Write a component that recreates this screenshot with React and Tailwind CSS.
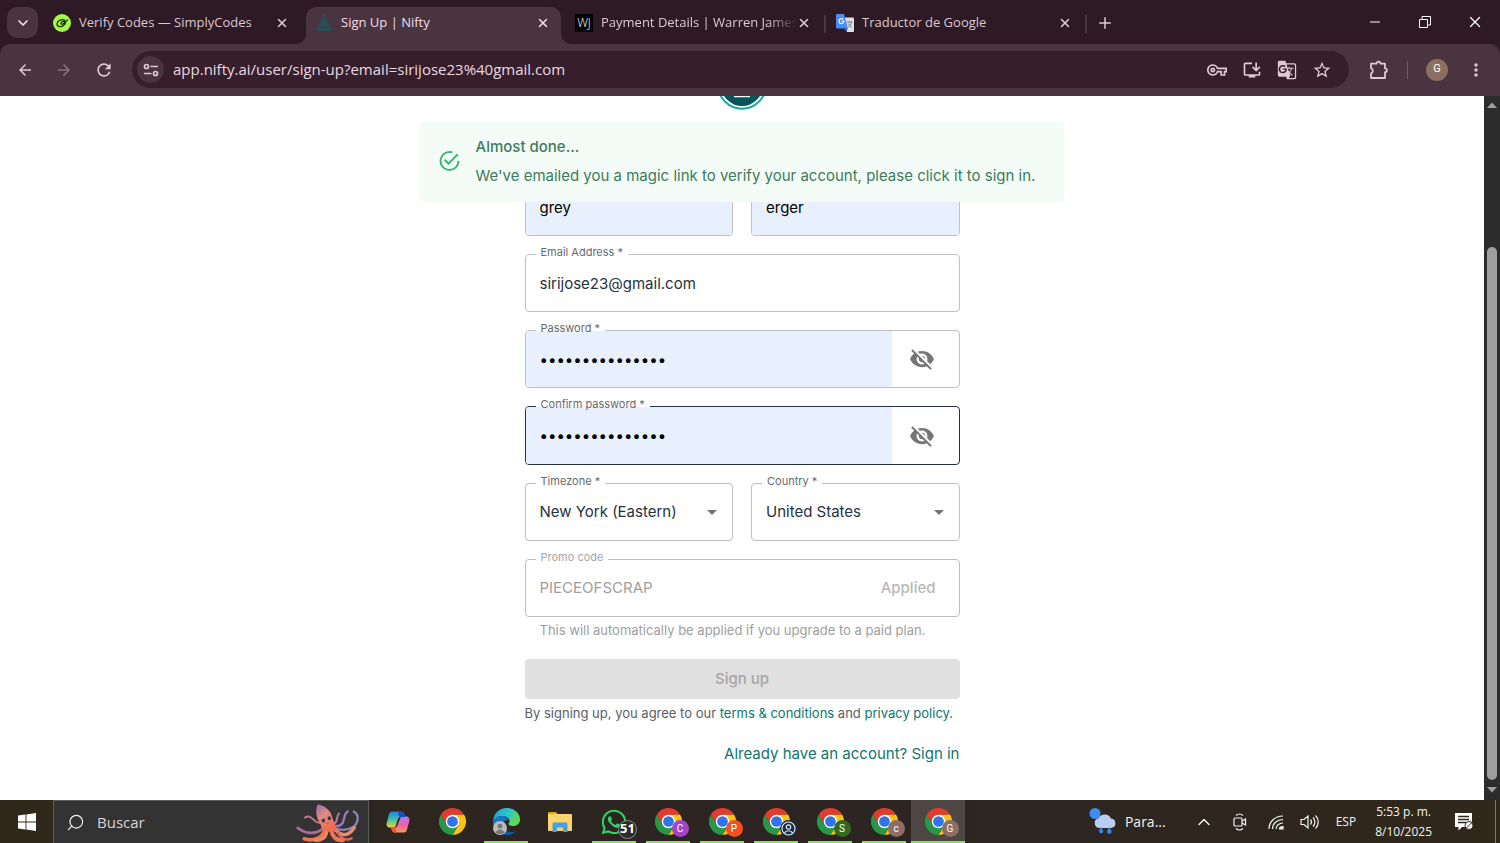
import { ChevronDown, ChevronUp, Minus, Plus, Search, X } from 'lucide-react';
import {
  MdArrowBack,
  MdArrowDropDown,
  MdArrowForward,
  MdGTranslate,
  MdInstallDesktop,
  MdMoreVert,
  MdOutlineVpnKey,
  MdRefresh,
  MdStarOutline,
  MdVisibilityOff,
} from 'react-icons/md';
import { FaWhatsapp } from 'react-icons/fa';

/* ---------- favicons ---------- */

const SimplyCodesIcon = () => (
  <svg viewBox="0 0 18 18" className="size-[18px] shrink-0">
    <circle cx="9" cy="9" r="9" fill="#a6f750" />
    <g fill="none" stroke="#1d3312" strokeWidth="1.3" strokeLinecap="round">
      <path d="M11.500 6C8.500 5 4.200 6.800 4 10c0 3 4.200 3.300 6.500 1.500 1.700-1.300 2.200-2.800 1.700-3.700-.8-1.200-3.700-.4-4.200 1.500-.2 1 .8 1.300 1.900.7L14.500 6" />
    </g>
  </svg>
);

const NiftyIcon = () => (
  <svg viewBox="0 0 18 18" className="size-[18px] shrink-0" fill="#23505a">
    <circle cx="9" cy="1.500" r="1.300" />
    <path d="M9 2.500c2 2 3.500 4 4.200 6.500H4.800C5.500 6.500 7 4.500 9 2.500Z" />
    <path d="M4.300 9.500h9.400c.3 1.300 1 2.200 2.300 2.800H2c1.300-.6 2-1.500 2.300-2.800Z" />
    <path d="M0 13h18c-.6 2-2 3.500-4 4H4c-2-.5-3.400-2-4-4Z" />
    <path d="M5 12.300c2.500 1.500 5.500 1.500 8 0" fill="none" stroke="#4a3440" strokeWidth=".8" />
  </svg>
);

const WarrenIcon = () => (
  <span className="flex size-[18px] shrink-0 items-center justify-center bg-black font-['Open_Sans',sans-serif] text-[12px] font-light text-white">
    WJ
  </span>
);

const TranslateIcon = () => (
  <svg viewBox="0 0 18 18" className="size-[18px] shrink-0">
    <path d="M7 3.500h10a1 1 0 0 1 1 1V17a1 1 0 0 1-1 1h-6z" fill="#dfe0e2" />
    <path d="M10.500 8h6M13.500 6.700V8m2 0c-.5 2.400-2 4.300-4 5.500m.8-4c.7 1.600 2 3.200 3.700 4.200" stroke="#6b7f86" fill="none" />
    <path d="M1.200 0H8l4 14.500H1.200A1.200 1.200 0 0 1 0 13.300V1.200A1.200 1.200 0 0 1 1.200 0Z" fill="#4b8bf4" />
    <path d="M8 14.500h4L9.800 18z" fill="#2b57c2" />
    <path d="M7.200 5.400A2.500 2.500 0 1 0 7.900 7.200H5.500" stroke="#fff" strokeWidth="1.100" fill="none" />
  </svg>
);

/* ---------- browser chrome ---------- */

const Tab = ({ icon, title, active, fade, divider }) => (
  <div className="flex h-[37px] w-[261px] shrink items-center">
    <div
      className={`relative flex h-full min-w-0 flex-1 items-center pr-[11px] pb-[5px] ${
        active ? 'rounded-t-[10px] bg-[#4a3440] pl-[9px] text-[#f0dfe7]' : 'pl-2 text-[#dcc8d2]'
      }`}
    >
      {active && (
        <>
          <svg viewBox="0 0 10 10" className="absolute bottom-0 -left-[10px] size-[10px]" fill="#4a3440">
            <path d="M10 0v10H0A10 10 0 0 0 10 0Z" />
          </svg>
          <svg viewBox="0 0 10 10" className="absolute -right-[10px] bottom-0 size-[10px]" fill="#4a3440">
            <path d="M0 0v10h10A10 10 0 0 1 0 0Z" />
          </svg>
        </>
      )}
      {icon}
      <span
        className={`ml-2 min-w-0 flex-1 overflow-hidden text-[13px] whitespace-nowrap ${
          fade ? '[mask-image:linear-gradient(to_right,black_85%,transparent)]' : ''
        }`}
      >
        {title}
      </span>
      <button type="button" aria-label={`Close ${title}`}>
        <X className="size-[14px]" strokeWidth={2.6} />
      </button>
    </div>
    <span className={`mx-[2px] mb-1 h-[18px] w-[2px] ${divider ? 'bg-[#4a3440]' : ''}`} />
  </div>
);

const TabStrip = () => (
  <header className="flex h-11 shrink-0 items-end bg-[#2d1a24] pl-[7px]">
    <button
      type="button"
      aria-label="Search tabs"
      className="mr-[7px] mb-[6px] flex size-[31px] shrink-0 items-center justify-center rounded-[10px] bg-[#4a3440] text-[#f0dfe7]"
    >
      <ChevronDown className="size-4" strokeWidth={2.6} />
    </button>
    <Tab icon={<SimplyCodesIcon />} title="Verify Codes — SimplyCodes" />
    <Tab icon={<NiftyIcon />} title="Sign Up | Nifty" active />
    <Tab icon={<WarrenIcon />} title="Payment Details | Warren James" fade divider />
    <Tab icon={<TranslateIcon />} title="Traductor de Google" divider />
    <button type="button" aria-label="New tab" className="mb-3 ml-[7px] text-[#dcc8d2]">
      <Plus className="size-[18px]" />
    </button>
    <div className="ml-auto flex self-stretch text-white">
      <button type="button" aria-label="Minimize" className="flex w-[50px] items-center justify-center">
        <Minus className="size-4" strokeWidth={1.5} />
      </button>
      <button type="button" aria-label="Restore" className="flex w-[50px] items-center justify-center">
        <svg viewBox="0 0 12 12" className="size-3" fill="none" stroke="currentColor">
          <path d="M.5 3.500h8v8h-8zM3 3V.5h8.500V9H9" />
        </svg>
      </button>
      <button type="button" aria-label="Close window" className="flex w-[50px] items-center justify-center">
        <X className="size-[18px]" strokeWidth={1.7} />
      </button>
    </div>
  </header>
);

const Toolbar = () => (
  <nav className="bg-[#2d1a24]">
    <div className="flex h-[52px] items-center rounded-t-[10px] bg-[#4a3440] pr-[14px] pb-px pl-4 text-[#dfc9d4]">
      <button type="button" aria-label="Back" className="mr-[21px]">
        <MdArrowBack className="size-[18px]" />
      </button>
      <button type="button" aria-label="Forward" className="mr-[21px] text-[#8b727f]">
        <MdArrowForward className="size-[18px]" />
      </button>
      <button type="button" aria-label="Reload" className="mr-[18px]">
        <MdRefresh className="size-5" />
      </button>
      <div className="flex h-[37px] min-w-0 flex-1 items-center gap-[15px] rounded-full bg-[#361f2b] pr-[17px] pl-[5px]">
        <button
          type="button"
          aria-label="Site information"
          className="-mr-[6px] flex size-[27px] shrink-0 items-center justify-center rounded-full bg-[#4a3440]"
        >
          <svg viewBox="0 0 16 14" className="h-[14px] w-4" fill="none" stroke="currentColor" strokeWidth="1.700">
            <circle cx="3.500" cy="3.500" r="2" />
            <circle cx="12.500" cy="10.500" r="2" />
            <path d="M7.500 3.500H15M1 10.500h7.500" />
          </svg>
        </button>
        <input
          aria-label="Address"
          className="min-w-0 flex-1 bg-transparent text-[15px] text-[#ead8e1] outline-none"
          defaultValue="app.nifty.ai/user/sign-up?email=sirijose23%40gmail.com"
        />
        <button type="button" aria-label="Passwords">
          <MdOutlineVpnKey className="size-5" />
        </button>
        <button type="button" aria-label="Install app">
          <MdInstallDesktop className="size-5" />
        </button>
        <button type="button" aria-label="Translate this page">
          <MdGTranslate className="size-5" />
        </button>
        <button type="button" aria-label="Bookmark">
          <MdStarOutline className="size-5" />
        </button>
      </div>
      <button type="button" aria-label="Extensions" className="ml-5">
        <svg viewBox="0 0 20 20" className="size-5" fill="none" stroke="currentColor" strokeWidth="1.800" strokeLinejoin="round">
          <path d="M2 3.600h5.600a1.900 1.900 0 0 1 3.800 0H16V8.300a1.900 1.900 0 0 1 0 3.800V18H2v-4.700a2.600 2.600 0 0 0 0-5z" />
        </svg>
      </button>
      <span className="mx-[18px] h-[18px] w-px bg-[#705864]" />
      <button
        type="button"
        aria-label="Profile"
        className="flex size-[22px] items-center justify-center rounded-full bg-[#8d6e63] font-['Roboto',sans-serif] text-[11px] text-white"
      >
        G
      </button>
      <button type="button" aria-label="Menu" className="ml-[18px]">
        <MdMoreVert className="size-5" />
      </button>
    </div>
  </nav>
);

const Scrollbar = () => (
  <div className="flex w-4 shrink-0 flex-col items-center bg-[#2c2c2c]" aria-hidden="true">
    <svg viewBox="0 0 16 16" className="size-4 shrink-0" fill="#a0a0a0">
      <path d="m8 6.500 5 5.500H3z" />
    </svg>
    <span className="grow-[135]" />
    <span className="w-[10px] grow-[533] rounded-full bg-[#9f9f9f]" />
    <svg viewBox="0 0 16 20" className="h-5 w-4 shrink-0" fill="#a0a0a0">
      <path d="m8 12.500 5-5.500H3z" />
    </svg>
  </div>
);

/* ---------- sign-up form ---------- */

const Outlined = ({ id, label, tone, children }) => {
  const tones = {
    focused: 'h-[59px] border-[#26323f]',
    disabled: 'h-[58px] border-[#bdbdbd]',
    normal: 'h-[58px] border-[#bfc0c4]',
  };
  return (
    <div className={`relative flex rounded border ${tones[tone || 'normal']}`}>
      {label && (
        <label
          htmlFor={id}
          className={`absolute -top-px left-[10px] flex h-px items-end bg-white px-[5px] text-[11px] leading-[6px] whitespace-pre ${
            tone === 'disabled' ? 'text-[#a6a6a6]' : 'text-[#666b70]'
          }`}
        >
          {label}
        </label>
      )}
      {children}
    </div>
  );
};

const TextField = ({ id, label, value, autofill }) => (
  <Outlined id={id} label={label}>
    <input
      id={id}
      aria-label={label ? undefined : id}
      defaultValue={value}
      className={`w-full min-w-0 rounded-[3px] px-[14px] pt-[2px] text-[15px] outline-none ${
        autofill ? 'bg-[#e8f0fe] text-black' : 'text-[#26323f]'
      }`}
    />
  </Outlined>
);

const PasswordField = ({ id, label, tone }) => (
  <Outlined id={id} label={label} tone={tone}>
    <input
      id={id}
      type="password"
      defaultValue="abcdefghijklmno"
      className="min-w-0 flex-1 rounded-l-[3px] bg-[#e8f0fe] px-[14px] pt-[2px] text-[15px] text-black outline-none"
    />
    <button type="button" aria-label="Show password" className="mr-[6px] flex w-[61px] items-center justify-center">
      <MdVisibilityOff className="size-[26px] text-[#757575]" />
    </button>
  </Outlined>
);

const SelectField = ({ id, label, value }) => (
  <Outlined id={id} label={label}>
    <select id={id} className="w-full appearance-none bg-transparent px-[14px] text-[15px] text-[#26323f] outline-none">
      <option>{value}</option>
    </select>
    <MdArrowDropDown className="pointer-events-none absolute top-4 right-2 size-6 text-[#757575]" />
  </Outlined>
);

const Alert = () => (
  <div
    role="alert"
    className="absolute top-[26px] left-1/2 z-10 flex h-20 w-[645px] max-w-full -translate-x-1/2 items-center gap-[14px] rounded bg-[#f3fcf7] px-[18px] pb-[2px] text-[15px] whitespace-nowrap text-[#417a5c]"
  >
    <svg viewBox="0 0 24 24" className="size-6 shrink-0" fill="#3fb573">
      <path d="M20,12A8,8 0 0,1 12,20A8,8 0 0,1 4,12A8,8 0 0,1 12,4C12.76,4 13.5,4.11 14.2,4.31L15.77,2.74C14.61,2.26 13.34,2 12,2A10,10 0 0,0 2,12A10,10 0 0,0 12,22A10,10 0 0,0 22,12M7.91,10.08L6.5,11.5L11,16L21,6L19.59,4.58L11,13.17L7.91,10.08Z" />
    </svg>
    <div>
      <p className="mb-[6px] leading-[23px] font-medium">Almost done...</p>
      <p className="leading-[23px]">
        We've emailed you a magic link to verify your account, please click it to sign in.
      </p>
    </div>
  </div>
);

const SignUpPage = () => (
  <main className="relative flex min-w-0 flex-1 flex-col items-center overflow-hidden bg-white font-['Inter',sans-serif]">
    <svg viewBox="0 36 50 14" className="h-[14px] w-[50px] shrink-0">
      <circle cx="25" cy="25" r="23.800" fill="#fff" stroke="#18ab9c" strokeWidth="2" />
      <circle cx="25" cy="25" r="21" fill="#06555a" />
      <path d="M17 36.500h16" stroke="#fff" strokeWidth="1.500" />
    </svg>
    <Alert />
    <form className="mt-[68px] flex w-full max-w-[435px] flex-col gap-[18px]">
      <div className="grid grid-cols-2 gap-[18px]">
        <TextField id="First name" value="grey" autofill />
        <TextField id="Last name" value="erger" autofill />
      </div>
      <TextField id="email" label="Email Address *" value="sirijose23@gmail.com" />
      <PasswordField id="password" label="Password *" />
      <PasswordField id="confirm" label="Confirm password *" tone="focused" />
      <div className="grid grid-cols-2 gap-[18px]">
        <SelectField id="timezone" label="Timezone *" value="New York (Eastern)" />
        <SelectField id="country" label="Country *" value="United States" />
      </div>
      <div>
        <Outlined id="promo" label="Promo code" tone="disabled">
          <input
            id="promo"
            disabled
            defaultValue="PIECEOFSCRAP"
            className="min-w-0 flex-1 px-[14px] text-[15px] text-[#9e9e9e]"
          />
          <button type="button" disabled className="mr-[23px] text-[15px] font-medium text-[#b8b8b8]">
            Applied
          </button>
        </Outlined>
        <p className="mt-[3px] px-[15px] text-[13px] leading-5 whitespace-nowrap text-[#9e9e9e]">
          This will automatically be applied if you upgrade to a paid plan.
        </p>
      </div>
      <div>
        <button
          type="button"
          disabled
          className="mt-px h-10 w-full rounded bg-[#e0e0e0] pt-px text-[15px] font-medium text-[#a6a6a6]"
        >
          Sign up
        </button>
        <p className="mt-1 text-[13px] leading-5 whitespace-nowrap text-[#5a6068]">
          By signing up, you agree to our{' '}
          <a href="#terms" className="text-[#0f766e]">
            terms &amp; conditions
          </a>{' '}
          and{' '}
          <a href="#privacy" className="text-[#0f766e]">
            privacy policy.
          </a>
        </p>
        <p className="mt-5 text-right text-[15px]">
          <a href="#sign-in" className="text-[#0f766e]">
            Already have an account? Sign in
          </a>
        </p>
      </div>
    </form>
  </main>
);

/* ---------- taskbar ---------- */

const Octopus = () => (
  <svg viewBox="885 20 195 122" className="h-[41px] w-[65px]" fill="none" strokeLinecap="round">
    <defs>
      <linearGradient id="octoHead" x1="0" y1="0" x2="0.6" y2="1">
        <stop offset="0" stopColor="#8d6fb0" />
        <stop offset=".45" stopColor="#e08a80" />
        <stop offset="1" stopColor="#f0694a" />
      </linearGradient>
    </defs>
    <path d="M965 100c-30 22-55 12-75-3" stroke="#a2709a" strokeWidth="8" />
    <path d="M960 82c-18 2-20-12-34-18-6-2-10 0-14 2" stroke="#c2788c" strokeWidth="6" />
    <path d="M1000 84c12-4 4-22 14-30" stroke="#b977a0" strokeWidth="6" />
    <path d="M1006 92c32-2 16-34 34-44" stroke="#9a7ab8" strokeWidth="7" />
    <path d="M1006 100c40 10 66-8 64-36-2-8-8-14-12-16" stroke="#8a83b8" strokeWidth="7" />
    <path d="M972 102c-8 28-38 36-62 28" stroke="#ee7452" strokeWidth="11" />
    <path d="M978 102c-2 24-14 34-36 32" stroke="#f58660" strokeWidth="10" />
    <path d="M990 100c4 24 14 36 36 34" stroke="#ee7452" strokeWidth="12" />
    <path d="M998 98c18 22 42 30 62 -2" stroke="#f18a66" strokeWidth="10" />
    <path d="M1010 112c12 20 30 24 42 16" stroke="#d9685c" strokeWidth="7" />
    <path d="M950 26c20 4 40 18 44 40 4 16 12 24 14 36-16 10-36 8-46-4-2-10-6-18-12-28-6-14-6-30 0-44Z" fill="url(#octoHead)" />
    <ellipse cx="967" cy="75" rx="5" ry="6" fill="#2f3a55" />
    <ellipse cx="985" cy="68" rx="5" ry="6" fill="#2f3a55" />
    <path d="M975 84c3 2 6 1 8-2" stroke="#9a3a35" strokeWidth="2" />
  </svg>
);

const CopilotIcon = () => (
  <svg viewBox="0 0 24 24" className="size-6">
    <defs>
      <linearGradient id="copilotA" x1="0" y1="0" x2="0" y2="1">
        <stop offset="0" stopColor="#1b7fe8" />
        <stop offset=".5" stopColor="#3fc3a8" />
        <stop offset="1" stopColor="#f5d130" />
      </linearGradient>
      <linearGradient id="copilotB" x1="0" y1="0" x2="0" y2="1">
        <stop offset="0" stopColor="#b07cf5" />
        <stop offset=".5" stopColor="#ee5fa8" />
        <stop offset="1" stopColor="#fb9a55" />
      </linearGradient>
    </defs>
    <path d="M6 1.500h9c2 0 2.800 1 3.300 2.700L19 7h-4c-2 0-2.800 1-3.300 2.600L10 15c-.5 1.800-1.500 2.500-3 2.500H4c-2.500 0-4-1.800-3.300-4.500L3 4.500C3.500 2.500 4.300 1.500 6 1.500Z" fill="url(#copilotA)" />
    <path d="M18 22.500H9c-2 0-2.800-1-3.300-2.700L5 17.500h3c2 0 3-1 3.500-2.600L14 9c.5-1.800 1.500-2.500 3-2.500h3c2.500 0 4 1.800 3.300 4.500L21 19.500c-.5 2-1.300 3-3 3Z" fill="url(#copilotB)" />
    <path d="M12.500 1.500H15c2 0 2.800 1 3.300 2.700L19 7h-4.500c-1 0-1.700-.5-2-1.500Z" fill="#1a4fc4" />
    <path d="M5 17.500h4l1.500 5H9c-2 0-2.800-1-3.300-2.700Z" fill="#f5503c" />
  </svg>
);

const ChromeIcon = () => (
  <svg viewBox="0 0 48 48" className="size-[27px]">
    <path d="M3.215 12A24 24 0 0 1 44.785 12H24L13.600 30Z" fill="#e33b2e" />
    <path d="M44.785 12A24 24 0 0 1 24 48L34.400 30 24 12Z" fill="#fbc116" />
    <path d="M24 48A24 24 0 0 1 3.215 12L13.600 30H34.400Z" fill="#279847" />
    <circle cx="24" cy="24" r="12" fill="#fff" />
    <circle cx="24" cy="24" r="9.500" fill="#2f74e8" />
  </svg>
);

const EdgeIcon = () => (
  <svg viewBox="0 0 27 27" className="size-[27px]">
    <defs>
      <linearGradient id="edgeTop" x1="0" y1="0" x2="1" y2=".4">
        <stop offset="0" stopColor="#1a9fe0" />
        <stop offset=".6" stopColor="#2fc8c4" />
        <stop offset="1" stopColor="#62d84e" />
      </linearGradient>
      <linearGradient id="edgeBottom" x1="0" y1="0" x2="1" y2="1">
        <stop offset="0" stopColor="#1683cc" />
        <stop offset="1" stopColor="#0f4f98" />
      </linearGradient>
    </defs>
    <path d="M0 13C1 5 6.500 0 13.500 0 21.500 0 27 5.500 27 11.500c0 4-3 6.500-7 6.500-3 0-4.500-1-4.500-2s1-1.300 1-3.200C16.500 10 13 8 9.500 8 5 8 1.500 10 0 13Z" fill="url(#edgeTop)" />
    <path d="M0 14C1 10 5 8 9.500 8c3.500 0 6.500 2 7 4.500-3-1.500-6.500 1-6.500 4.500 0 4.500 4 7 8.500 7 2 0 4-.5 5.500-1.500C21.500 25.500 18 27 13.500 27 5.500 27 0 21 0 14Z" fill="url(#edgeBottom)" />
  </svg>
);

const FolderIcon = () => (
  <svg viewBox="0 0 24 20" className="h-5 w-6">
    <path d="M0 1a1 1 0 0 1 1-1h7l2 2.500H0z" fill="#e8a317" />
    <path d="M0 2h23a1 1 0 0 1 1 1v15a1 1 0 0 1-1 1H1a1 1 0 0 1-1-1z" fill="#fbd46d" />
    <path d="M4.500 20v-8a1.500 1.500 0 0 1 1.500-1.500h12a1.500 1.500 0 0 1 1.500 1.500v8H15v-4.500H9V20z" fill="#4a9fe0" />
  </svg>
);

const PersonBadge = () => (
  <svg viewBox="0 0 15 15" className="size-[15px]" fill="none" stroke="#dbe6f7" strokeWidth="1.200">
    <circle cx="7.500" cy="7.500" r="6.500" fill="#1d2a40" />
    <circle cx="7.500" cy="6" r="2.200" />
    <path d="M3.500 12c1.500-3 6.500-3 8 0" />
  </svg>
);

const TaskButton = ({ label, running, active, badge, badgeClass, children }) => (
  <button
    type="button"
    aria-label={label}
    className={`relative flex h-full w-[54px] items-center justify-center ${active ? 'bg-[#4d4643]' : ''}`}
  >
    <span className="relative flex">
      {children}
      {badge && (
        <span
          className={`absolute -right-[7px] -bottom-[2px] flex size-[17px] items-center justify-center rounded-full font-['Roboto',sans-serif] text-[10px] text-white ${badgeClass}`}
        >
          {badge}
        </span>
      )}
    </span>
    {running && <span className={`absolute bottom-0 h-[2px] bg-[#84e35c] ${active ? 'w-full' : 'w-11'}`} />}
  </button>
);

const Taskbar = () => (
  <footer className="flex h-[43px] shrink-0 items-center bg-linear-to-r from-[#2f281a] via-[#2c2422] to-[#30281b] text-[#f2f2f2]">
    <button type="button" aria-label="Start" className="flex h-full w-[53px] items-center justify-center">
      <svg viewBox="0 0 18 18" className="size-[18px]" fill="#fff">
        <path d="M0 2.600 7.500 1.500V8.600H0zM8.400 1.400 18 0v8.600H8.400zM0 9.400h7.500v7.100L0 15.400zM8.400 9.400H18V18l-9.600-1.400z" />
      </svg>
    </button>
    <div className="flex h-full w-[316px] items-center border border-b-0 border-[#5a5a58] bg-[#333] pr-[7px] pl-3">
      <Search className="size-[19px] shrink-0 -scale-x-100" strokeWidth={1.5} />
      <input
        aria-label="Buscar"
        placeholder="Buscar"
        className="ml-3 min-w-0 flex-1 bg-transparent text-[15px] outline-none placeholder:text-[#d6d6d6]"
      />
      <Octopus />
    </div>
    <div className="ml-[2px] flex h-full">
      <TaskButton label="Copilot">
        <CopilotIcon />
      </TaskButton>
      <TaskButton label="Chrome">
        <ChromeIcon />
      </TaskButton>
      <TaskButton label="Edge" running>
        <EdgeIcon />
        <svg viewBox="0 0 14 14" className="absolute bottom-0 left-0 size-[14px]">
          <circle cx="7" cy="7" r="7" fill="#b9b9b9" />
          <circle cx="7" cy="5.200" r="2.400" fill="#777" />
          <path d="M2.800 11.500c1-4 7.400-4 8.400 0-2 2-6.400 2-8.400 0Z" fill="#777" />
        </svg>
      </TaskButton>
      <TaskButton label="File Explorer">
        <FolderIcon />
      </TaskButton>
      <TaskButton label="WhatsApp" running>
        <FaWhatsapp className="size-7 text-[#2fd366]" />
        <span className="absolute -right-[9px] -bottom-[3px] flex size-[19px] items-center justify-center rounded-full border border-[#8a8a8a] bg-[#2c2c2c] text-[13px] font-bold text-white">
          51
        </span>
      </TaskButton>
      <TaskButton label="Chrome, C" running badge="C" badgeClass="bg-[#a544c4]">
        <ChromeIcon />
      </TaskButton>
      <TaskButton label="Chrome, P" running badge="P" badgeClass="bg-[#f4511e]">
        <ChromeIcon />
      </TaskButton>
      <TaskButton label="Chrome, guest" running badge={<PersonBadge />} badgeClass="bg-[#1d2a40]">
        <ChromeIcon />
      </TaskButton>
      <TaskButton label="Chrome, S" running badge="S" badgeClass="bg-[#33691e]">
        <ChromeIcon />
      </TaskButton>
      <TaskButton label="Chrome, c" running badge="c" badgeClass="bg-[#8d6e63]">
        <ChromeIcon />
      </TaskButton>
      <TaskButton label="Chrome, G" running active badge="G" badgeClass="bg-[#8d6e63]">
        <ChromeIcon />
      </TaskButton>
    </div>
    <div className="ml-auto flex h-full items-center text-[14px]">
      <button type="button" className="flex items-center gap-2">
        <svg viewBox="0 0 28 27" className="h-[27px] w-7">
          <circle cx="6" cy="5.500" r="5.500" fill="#3d8df5" />
          <path d="M10 20a5 5 0 0 1-.5-9.800A7 7 0 0 1 22 10.500a4.800 4.800 0 0 1 .5 9.500z" fill="#b9cdf3" />
          <path d="M12 19c2 2.500 2.500 3.500 2 5-1 2-4 1.500-4-.5 0-1.500 1-2.500 2-4.500ZM20 19c2 2.500 3 3.500 2.500 5.500-1 2-4.500 1.500-4.500-.5 0-1.500 1-3 2-5Z" fill="#2f86f0" />
        </svg>
        Para...
      </button>
      <button type="button" aria-label="Show hidden icons" className="ml-7">
        <ChevronUp className="size-5" strokeWidth={1.7} />
      </button>
      <button type="button" aria-label="Meet now" className="ml-[19px]">
        <svg viewBox="0 0 14 18" className="h-[18px] w-[14px]" fill="none" stroke="currentColor" strokeWidth="1.200">
          <rect x="1" y="5" width="8" height="8" rx="1" />
          <path d="m9 8 3.500-2v6L9 10M3 2.500C5 .7 8 .7 10 2.500M3 15.500c2 1.800 5 1.800 7 0" />
        </svg>
      </button>
      <button type="button" aria-label="Network" className="ml-[21px]">
        <svg viewBox="0 0 16 16" className="size-4" fill="none" stroke="currentColor" strokeWidth="1.200">
          <path d="M1 15C1 7.500 7 2 15 2M4.500 15C4.500 9.500 9 5.500 15 5.500M8 15c0-3.500 3-6 7-6" />
          <path d="M11.500 15c0-1.500 1.500-2.500 3.500-2.500V15z" fill="currentColor" />
        </svg>
      </button>
      <button type="button" aria-label="Volume" className="ml-4">
        <svg viewBox="0 0 20 16" className="h-4 w-5" fill="none" stroke="currentColor" strokeWidth="1.200">
          <path d="M1 5.500h3L8 2v12l-4-3.500H1zM10.500 5.500c1.300 1.500 1.300 3.500 0 5M13 3.500c2.500 2.500 2.500 6.500 0 9M15.500 1.500c3.700 3.700 3.700 9.300 0 13" />
        </svg>
      </button>
      <span className="ml-4 text-[12px]">ESP</span>
      <div className="ml-[19px] text-center text-[12px] leading-5">
        <p>5:53 p. m.</p>
        <p>8/10/2025</p>
      </div>
      <button type="button" aria-label="Notifications" className="ml-[22px]">
        <svg viewBox="0 0 20 19" className="h-[19px] w-5">
          <path d="M1 1h17v14H8l-3.500 3.500V15H1z" fill="#fff" />
          <path d="M4 4.500h11M4 7.500h11M4 10.500h8" stroke="#30281b" strokeWidth="1.300" />
          <circle cx="15" cy="13.500" r="4" fill="#fff" stroke="#30281b" />
          <path d="m12.500 16 5-5" stroke="#30281b" />
        </svg>
      </button>
      <span className="mr-1 ml-[21px] h-full w-px bg-[#7d776c]" />
    </div>
  </footer>
);

export default function App() {
  return (
    <div className="flex h-screen flex-col overflow-hidden font-['Open_Sans','Noto_Sans',sans-serif]">
      <TabStrip />
      <Toolbar />
      <div className="flex min-h-0 flex-1">
        <SignUpPage />
        <Scrollbar />
      </div>
      <Taskbar />
    </div>
  );
}
